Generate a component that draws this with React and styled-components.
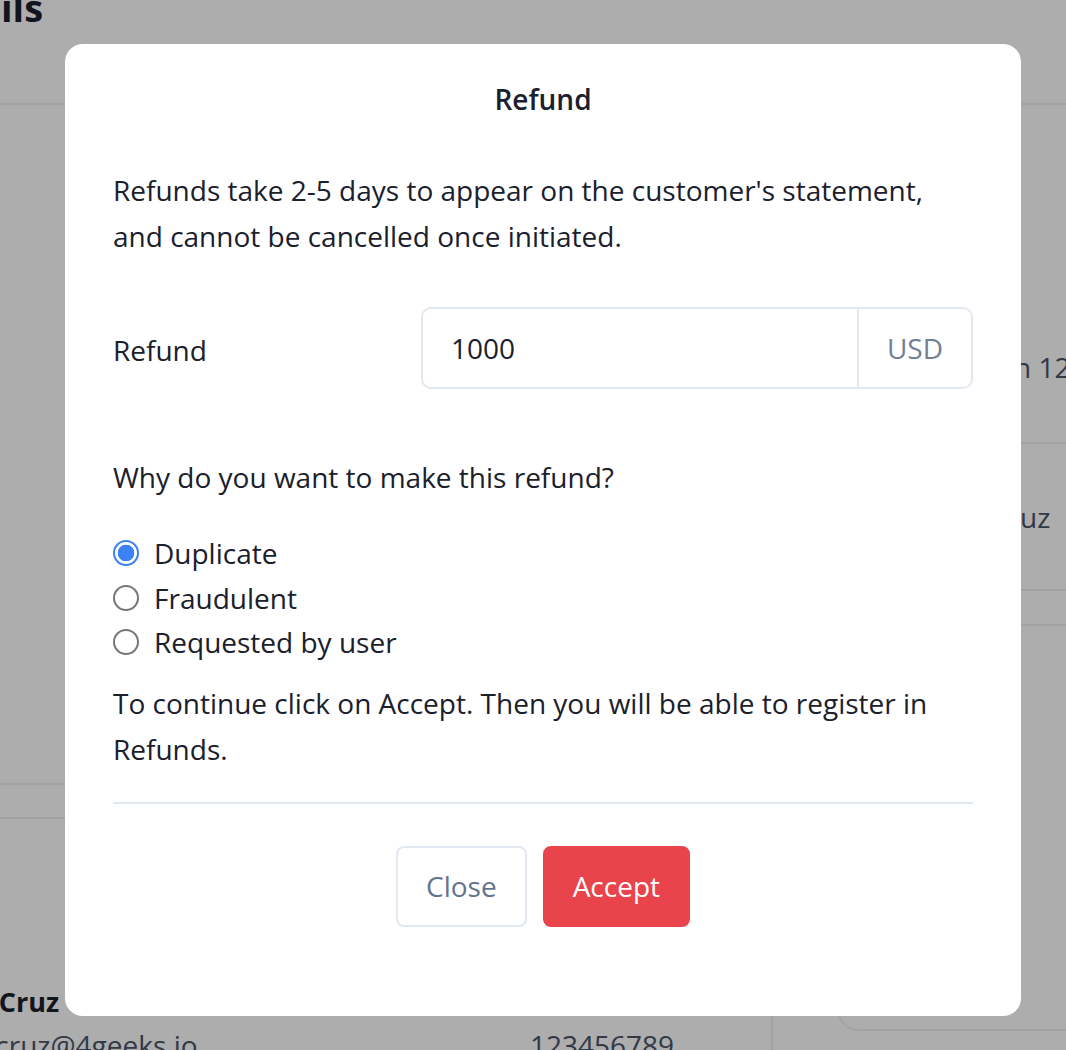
import React, { useState } from 'react'
import styled, { createGlobalStyle } from 'styled-components'

const GlobalStyle = createGlobalStyle`
    html, body {
        margin: 0;
        padding: 0;
        width: 1066px;
        height: 1050px;
        overflow: hidden;
        font-family: "Open Sans", "Noto Sans", sans-serif;
        color: #1a202c;
        background: #ffffff;
    }
    * {
        box-sizing: border-box;
    }
`

const reasons = ['Duplicate', 'Fraudulent', 'Requested by user']

function BackgroundPage() {
    return (
        <Page aria-hidden="true">
            <TopBar>
                <PageTitle>Details</PageTitle>
            </TopBar>
            <Body>
                <LeftCol>
                    <LeftSpacer />
                    <LeftStrip />
                    <Customer>
                        <CustomerName>Juan Cruz</CustomerName>
                        <ContactRow>
                            <span>juan.cruz@4geeks.io</span>
                            <span>123456789</span>
                        </ContactRow>
                    </Customer>
                </LeftCol>
                <RightCol>
                    <InfoRow>
                        <InfoLabel>Date</InfoLabel>
                        <InfoValue>Jan 12</InfoValue>
                    </InfoRow>
                    <InfoRow $tight>
                        <InfoLabel>Customer</InfoLabel>
                        <InfoValue>Cruz</InfoValue>
                    </InfoRow>
                    <InfoCard />
                </RightCol>
            </Body>
        </Page>
    )
}

function RefundModal() {
    const [reason, setReason] = useState('Duplicate')
    const [amount, setAmount] = useState('1000')

    return (
        <Overlay>
            <Modal role="dialog" aria-labelledby="refund-title">
                <ModalTitle id="refund-title">Refund</ModalTitle>
                <Text>
                    Refunds take 2-5 days to appear on the customer's statement,
                    and cannot be cancelled once initiated.
                </Text>

                <AmountRow>
                    <FieldLabel htmlFor="refund-amount">Refund</FieldLabel>
                    <InputGroup>
                        <AmountInput
                            id="refund-amount"
                            value={amount}
                            onChange={(e) => setAmount(e.target.value)}
                        />
                        <Addon>USD</Addon>
                    </InputGroup>
                </AmountRow>

                <Question>Why do you want to make this refund?</Question>

                <RadioList>
                    {reasons.map((r) => (
                        <RadioLabel key={r}>
                            <Radio
                                type="radio"
                                name="reason"
                                checked={reason === r}
                                onChange={() => setReason(r)}
                            />
                            {r}
                        </RadioLabel>
                    ))}
                </RadioList>

                <Note>
                    To continue click on Accept. Then you will be able to register in
                    Refunds.
                </Note>

                <Divider />

                <Footer>
                    <Button $variant="outline">Close</Button>
                    <Button $variant="danger">Accept</Button>
                </Footer>
            </Modal>
        </Overlay>
    )
}

export default function App() {
    return (
        <>
            <GlobalStyle />
            <BackgroundPage />
            <RefundModal />
        </>
    )
}

/* background page (scrolled, partly off screen) */

const Page = styled.div`
    width: 1200px;
    margin: -40px 0 0 -70px;
    background: #ffffff;
`

const TopBar = styled.header`
    height: 145px;
    padding-top: 22px;
    border-bottom: 2px solid #edf0f4;
`

const PageTitle = styled.h1`
    margin: 0 0 0 -19px;
    font-size: 38px;
    line-height: 50px;
    font-weight: 700;
    color: #1a202c;
`

const Body = styled.div`
    display: grid;
    grid-template-columns: 843px 1fr;
`

const LeftCol = styled.section`
    display: flex;
    flex-direction: column;
    border-right: 2px solid #edf0f4;
`

const LeftSpacer = styled.div`
    height: 680px;
    border-bottom: 2px solid #edf0f4;
`

const LeftStrip = styled.div`
    height: 34px;
    border-bottom: 2px solid #edf0f4;
`

const Customer = styled.div`
    padding: 163px 0 0 1px;
    display: flex;
    flex-direction: column;
`

const CustomerName = styled.div`
    font-size: 27px;
    font-weight: 700;
    line-height: 40px;
    color: #1a202c;
`

const ContactRow = styled.div`
    display: grid;
    grid-template-columns: 599px 1fr;
    font-size: 28px;
    line-height: 46px;
    color: #4a5568;
`

const RightCol = styled.section`
    padding: 187px 0 0 64px;
    display: flex;
    flex-direction: column;
`

const InfoRow = styled.div`
    display: grid;
    grid-template-columns: 154px 1fr;
    align-items: center;
    padding: ${(p) => (p.$tight ? '50px 0 49px' : '52px 0')};
    border-bottom: 2px solid #edf0f4;
    font-size: 28px;
    line-height: 46px;
    color: #4a5568;
`

const InfoLabel = styled.span`
    color: #718096;
`

const InfoValue = styled.span`
    white-space: nowrap;
`

const InfoCard = styled.div`
    margin-top: 33px;
    height: 407px;
    border: 2px solid #edf0f4;
    border-radius: 22px;
`

/* modal */

const Overlay = styled.div`
    position: fixed;
    inset: 0;
    background: rgba(0, 0, 0, 0.32);
    display: flex;
    justify-content: center;
    align-items: flex-start;
    padding: 44px 0 0 20px;
`

const Modal = styled.div`
    width: 956px;
    height: 972px;
    background: #ffffff;
    border-radius: 18px;
    padding: 35px 48px 0;
    display: flex;
    flex-direction: column;
`

const ModalTitle = styled.h2`
    margin: 0;
    text-align: center;
    font-size: 28px;
    line-height: 40px;
    font-weight: 600;
    color: #1a202c;
`

const Text = styled.p`
    margin: 48px 0 0;
    font-size: 28px;
    line-height: 46px;
    color: #1a202c;
`

const AmountRow = styled.div`
    margin-top: 48px;
    display: grid;
    grid-template-columns: 308px 1fr;
    align-items: center;
`

const FieldLabel = styled.label`
    font-size: 28px;
    padding-top: 4px;
    color: #1a202c;
`

const InputGroup = styled.div`
    display: flex;
    height: 82px;
    border: 2px solid #e2e8f0;
    border-radius: 10px;
    overflow: hidden;
`

const AmountInput = styled.input`
    flex: 1;
    min-width: 0;
    border: none;
    outline: none;
    padding: 0 28px;
    font-family: inherit;
    font-size: 28px;
    color: #1a202c;
    background: transparent;
`

const Addon = styled.div`
    width: 114px;
    display: flex;
    align-items: center;
    justify-content: center;
    border-left: 2px solid #e2e8f0;
    font-size: 28px;
    color: #718096;
`

const Question = styled.p`
    margin: 65px 0 0;
    font-size: 28px;
    line-height: 46px;
`

const RadioList = styled.div`
    margin-top: 31px;
    display: flex;
    flex-direction: column;
`

const RadioLabel = styled.label`
    display: flex;
    align-items: center;
    gap: 15px;
    height: 44.5px;
    font-size: 28px;
    color: #1a202c;
    cursor: pointer;
`

const Radio = styled.input`
    appearance: none;
    margin: 0;
    width: 26px;
    height: 26px;
    border-radius: 50%;
    border: 2px solid #767676;
    background: #ffffff;
    flex-shrink: 0;

    &:checked {
        border-color: #3b82f6;
        background: radial-gradient(circle, #3b82f6 0 8px, #ffffff 8.6px);
    }
`

const Note = styled.p`
    margin: 15px 0 0;
    font-size: 28px;
    line-height: 46px;
`

const Divider = styled.hr`
    margin: 30px 0 0;
    border: none;
    border-top: 2px solid #e2e8f0;
`

const Footer = styled.div`
    margin-top: 42px;
    display: flex;
    justify-content: center;
    gap: 16px;
`

const Button = styled.button`
    height: 81px;
    padding: 0 28px;
    border-radius: 8px;
    font-family: inherit;
    font-size: 28px;
    cursor: pointer;
    border: 2px solid ${(p) => (p.$variant === 'danger' ? '#e9434c' : '#e2e8f0')};
    background: ${(p) => (p.$variant === 'danger' ? '#e9434c' : '#ffffff')};
    color: ${(p) => (p.$variant === 'danger' ? '#ffffff' : '#64748b')};
`
